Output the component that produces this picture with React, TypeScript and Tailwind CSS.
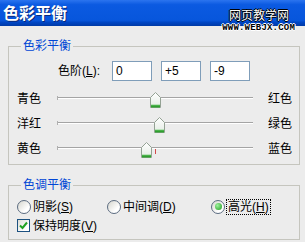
import React from "react";

// 色彩平衡 dialog (Photoshop, XP theme)
const sliders = [
  { left: "青色", right: "红色", value: 0 },
  { left: "洋红", right: "绿色", value: 5 },
  { left: "黄色", right: "蓝色", value: -9 },
];

function Thumb({ value }: { value: number }) {
  const pct = ((value + 100) / 200) * 100;
  return (
    <svg
      width="11"
      height="16"
      viewBox="0 0 11 16"
      className="absolute top-0"
      style={{ left: `calc(${pct}% - 5.5px)` }}
    >
      <defs>
        <linearGradient id="tb" x1="0" y1="0" x2="0" y2="1">
          <stop offset="0" stopColor="#ffffff" />
          <stop offset="1" stopColor="#e3ebe3" />
        </linearGradient>
      </defs>
      <path d="M5.5 0.5 L10.5 5.5 V15.5 H0.5 V5.5 Z" fill="url(#tb)" stroke="#94a294" />
      <rect x="1" y="13" width="9" height="2.5" fill="#2fa02f" />
      <rect x="1" y="12.5" width="9" height="0.8" fill="#8fd88f" />
    </svg>
  );
}

function Radio({ checked }: { checked?: boolean }) {
  return (
    <span className="flex h-[14px] w-[14px] shrink-0 items-center justify-center rounded-full border border-[#5b6b80] bg-[linear-gradient(135deg,#d6d6ce,#ffffff_70%)]">
      {checked && (
        <span className="h-[7px] w-[7px] rounded-full bg-[radial-gradient(circle_at_35%_35%,#9ef29e,#1c9c1c)]" />
      )}
    </span>
  );
}

export default function App() {
  return (
    <div className="relative h-[242px] w-[305px] overflow-hidden bg-[#ececec] font-['Liberation_Sans','Noto_Sans_CJK_SC',sans-serif] text-[12px] leading-[14px] text-black">
      <div className="flex h-[26px] items-center bg-[linear-gradient(#2b74ef_0%,#0b5ae1_18%,#0756dc_78%,#0046c4_86%,#003aa6_100%)] pb-[3px] pl-[3px]">
        <span className="font-['Noto_Sans_CJK_SC',sans-serif] text-[16px] font-bold leading-[20px] text-white [text-shadow:1px_1px_0_#0b2a7a]">
          色彩平衡
        </span>
      </div>

      {/* watermark */}
      <div className="absolute right-[10px] top-[8px] flex flex-col items-end">
        <span className="mr-[6px] font-['Noto_Sans_CJK_SC',sans-serif] text-[12px] leading-[14px] text-white [text-shadow:1px_0_0_#000,-1px_0_0_#000,0_1px_0_#000,0_-1px_0_#000]">
          网页教学网
        </span>
        <span className="mt-[2px] font-['Liberation_Mono',monospace] text-[9px] font-bold leading-[8px] tracking-[0.2px] text-black [text-shadow:1px_0_0_#fff,-1px_0_0_#fff,0_1px_0_#fff,0_-1px_0_#fff]">
          WWW.WEBJX.COM
        </span>
      </div>

      <fieldset className="ml-[8px] mt-[13px] w-[292px] border border-[#c5c5be] pb-[3px] pl-[8px] pr-[7px]">
        <legend className="ml-[4px] px-[2px] text-[#0046d5]">色彩平衡</legend>
        <div className="mt-[8px] flex h-[20px] items-center">
          <span className="w-[83px] text-right">
            色阶(<span className="underline">L</span>):
          </span>
          <div className="ml-[12px] flex gap-[9px]">
            {["0", "+5", "-9"].map((v) => (
              <div
                key={v}
                className="flex h-[20px] w-[40px] items-center border border-[#7f9db9] bg-white pl-[3px]"
              >
                {v}
              </div>
            ))}
          </div>
        </div>
        <div className="mt-[5px] flex flex-col">
          {sliders.map((s) => (
            <div key={s.left} className="flex h-[25px] items-center gap-[16px]">
              <span className="w-[24px]">{s.left}</span>
              <div className="relative mb-[3px] mt-[6px] h-[16px] w-[196px] self-start">
                <div className="absolute left-0 right-0 top-[5px] h-[2px] border-t border-[#a4a4a4] bg-white" />
                <div className="absolute left-0 top-[4px] h-[4px] w-px bg-[#b0b0b0]" />
                <div className="absolute left-[98px] top-[7px] h-[5px] w-px bg-[#d24a4a]" />
                <Thumb value={s.value} />
              </div>
              <span className="ml-[-1px] w-[24px]">{s.right}</span>
            </div>
          ))}
        </div>
      </fieldset>

      <fieldset className="ml-[8px] mt-[13px] w-[292px] border border-[#c5c5be] pb-[4px] pl-[8px] pr-[7px]">
        <legend className="ml-[4px] px-[2px] text-[#0046d5]">色调平衡</legend>
        <div className="mt-[5px] flex h-[19px] items-center">
          <div className="flex w-[90px] items-center gap-[2px]">
            <Radio />
            <span>
              阴影(<span className="underline">S</span>)
            </span>
          </div>
          <div className="flex w-[104px] items-center gap-[2px]">
            <Radio />
            <span>
              中间调(<span className="underline">D</span>)
            </span>
          </div>
          <div className="flex items-center gap-[1px]">
            <Radio checked />
            <span className="border border-dotted border-black px-px">
              高光(<span className="underline">H</span>)
            </span>
          </div>
        </div>
        <div className="flex h-[19px] items-center gap-[3px]">
          <span className="flex h-[13px] w-[13px] items-center justify-center border border-[#1c5180] bg-[linear-gradient(135deg,#dcdcd4,#ffffff_75%)]">
            <svg width="9" height="9" viewBox="0 0 9 9">
              <path d="M1 4.5 L3.5 7 L8 1.5" fill="none" stroke="#21a121" strokeWidth="2" />
            </svg>
          </span>
          <span>
            保持明度(<span className="underline">V</span>)
          </span>
        </div>
      </fieldset>
    </div>
  );
}
